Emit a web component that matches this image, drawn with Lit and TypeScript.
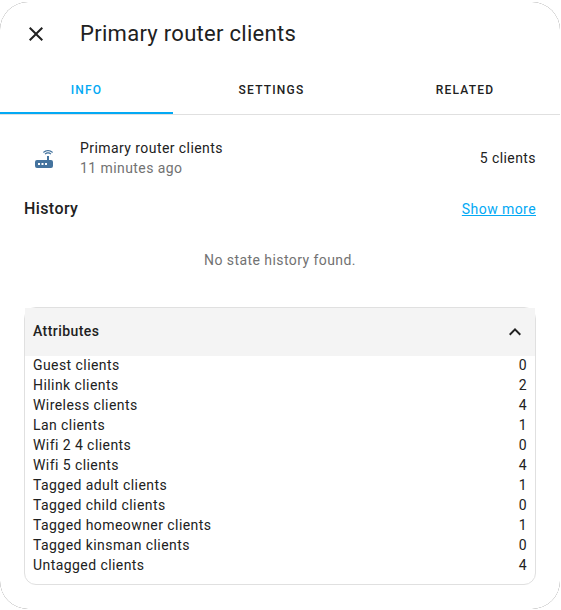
import { LitElement, html, css, svg } from "lit";
import { customElement, state } from "lit/decorators.js";

const ICON_CLOSE =
  "M19,6.41L17.59,5L12,10.59L6.41,5L5,6.41L10.59,12L5,17.59L6.41,19L12,13.41L17.59,19L19,17.59L13.41,12L19,6.41Z";
const ICON_ROUTER =
  "M20.2,5.9L21,5.1C19.6,3.7 17.8,3 16,3C14.2,3 12.4,3.7 11,5.1L11.8,5.9C13,4.8 14.5,4.2 16,4.2C17.5,4.2 19,4.8 20.2,5.9M19.3,6.7C18.4,5.8 17.2,5.3 16,5.3C14.8,5.3 13.6,5.8 12.7,6.7L13.5,7.5C14.2,6.8 15.1,6.5 16,6.5C16.9,6.5 17.8,6.8 18.5,7.5L19.3,6.7M19,13H17V9H15V13H5A2,2 0 0,0 3,15V19A2,2 0 0,0 5,21H19A2,2 0 0,0 21,19V15A2,2 0 0,0 19,13M8,18H6V16H8V18M11.5,18H9.5V16H11.5V18M15,18H13V16H15V18Z";
const ICON_CHEVRON_UP =
  "M7.41,15.41L12,10.83L16.59,15.41L18,14L12,8L6,14L7.41,15.41Z";

const icon = (path: string) =>
  html`<svg class="icon" viewBox="0 0 24 24">${svg`<path d=${path}></path>`}</svg>`;

@customElement("app-root")
export class AppRoot extends LitElement {
  @state() private tab = "Info";
  @state() private expanded = true;

  private attributesList: [string, number][] = [
    ["Guest clients", 0],
    ["Hilink clients", 2],
    ["Wireless clients", 4],
    ["Lan clients", 1],
    ["Wifi 2 4 clients", 0],
    ["Wifi 5 clients", 4],
    ["Tagged adult clients", 1],
    ["Tagged child clients", 0],
    ["Tagged homeowner clients", 1],
    ["Tagged kinsman clients", 0],
    ["Untagged clients", 4],
  ];

  static styles = css`
    :host {
      display: block;
      box-sizing: border-box;
      height: 610px;
      padding: 2px 1px 1px 0;
      background: #fff;
      color: #212121;
      font: 400 14px/20px Roboto, sans-serif;
      letter-spacing: 0.43px;
    }
    .edge {
      height: 607px;
      border-radius: 28px;
      background: #555;
    }
    .dialog {
      height: 607px;
      border-radius: 28px;
      background: #fff;
    }
    .icon {
      display: block;
      width: 24px;
      height: 24px;
      fill: currentColor;
    }
    .header {
      display: flex;
      align-items: center;
      height: 64px;
      padding: 0 24px;
      gap: 32px;
    }
    .title {
      margin: 0;
      font-size: 22px;
      line-height: 28px;
      font-weight: 400;
      letter-spacing: 0.29px;
    }
    .tabs {
      display: flex;
      height: 48px;
      border-bottom: 1px solid #e0e0e0;
    }
    .tab {
      display: flex;
      box-sizing: border-box;
      align-items: center;
      justify-content: center;
      flex: 1 1 190px;
      font-size: 12px;
      font-weight: 500;
      letter-spacing: 1.2px;
      text-transform: uppercase;
      border-bottom: 2px solid transparent;
      padding-top: 2px;
    }
    .tab.info {
      flex-basis: 173px;
    }
    .tab.settings {
      flex-basis: 197px;
    }
    .tab.active {
      color: #03a9f4;
      border-color: #03a9f4;
    }
    .content {
      padding: 23px 24px 0;
    }
    .entity {
      display: flex;
      align-items: center;
      height: 40px;
    }
    .entity .icon {
      margin: 2px 24px 0 8px;
      color: #44739e;
    }
    .names {
      flex: 1;
    }
    .secondary {
      color: #727272;
    }
    .history {
      display: flex;
      align-items: center;
      justify-content: space-between;
      height: 28px;
      margin-top: 17px;
    }
    .history h2 {
      margin: 0;
      font-size: 16px;
      line-height: 28px;
      font-weight: 500;
      letter-spacing: 0.4px;
    }
    .history a {
      color: #03a9f4;
      text-decoration: underline;
    }
    .empty {
      margin-top: 27px;
      text-align: center;
      color: #727272;
    }
    .panel {
      margin-top: 37px;
      border: 1px solid #e0e0e0;
      border-radius: 12px;
    }
    .summary {
      display: flex;
      align-items: center;
      justify-content: space-between;
      height: 48px;
      padding: 0 8px;
      background: #f4f4f4;
      font-weight: 500;
    }
    .summary span {
      padding-bottom: 2px;
    }
    .rows {
      margin-top: -1px;
      padding-bottom: 9px;
    }
    .row {
      display: flex;
      justify-content: space-between;
      padding: 0 8px;
    }
  `;

  render() {
    return html`
      <div class="edge">
        <div class="dialog">
          <div class="header">
            ${icon(ICON_CLOSE)}
            <h1 class="title">Primary router clients</h1>
          </div>
          <div class="tabs">
            ${["Info", "Settings", "Related"].map(
              (name) => html`<div
                class="tab ${name.toLowerCase()} ${this.tab === name ? "active" : ""}"
                @click=${() => (this.tab = name)}
              >${name}</div>`
            )}
          </div>
          <div class="content">
            <div class="entity">
              ${icon(ICON_ROUTER)}
              <div class="names">
                <div>Primary router clients</div>
                <div class="secondary">11 minutes ago</div>
              </div>
              <div>5 clients</div>
            </div>
            <div class="history">
              <h2>History</h2>
              <a>Show more</a>
            </div>
            <div class="empty">No state history found.</div>
            <div class="panel">
              <div class="summary" @click=${() => (this.expanded = !this.expanded)}>
                <span>Attributes</span>${icon(ICON_CHEVRON_UP)}
              </div>
              ${this.expanded
                ? html`<div class="rows">
                    ${this.attributesList.map(
                      ([name, value]) =>
                        html`<div class="row"><span>${name}</span><span>${value}</span></div>`
                    )}
                  </div>`
                : ""}
            </div>
          </div>
        </div>
      </div>
    `;
  }
}
